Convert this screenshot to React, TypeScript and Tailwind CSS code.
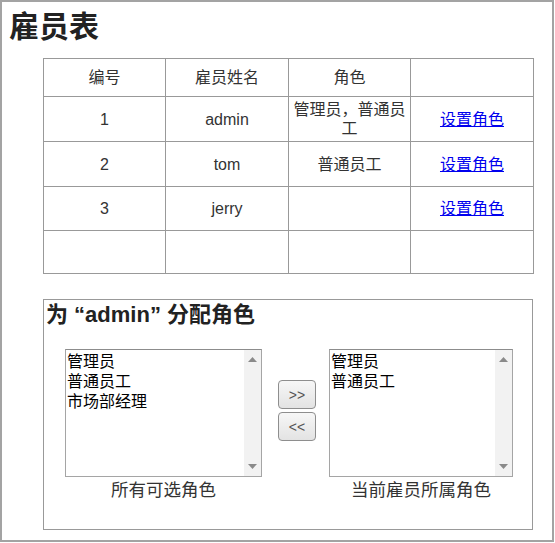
import React from 'react';

const rows = [
  { id: '1', name: 'admin', roles: '管理员，普通员工', h: 'h-[45px]', link: true },
  { id: '2', name: 'tom', roles: '普通员工', h: 'h-[45px]', link: true },
  { id: '3', name: 'jerry', roles: '', h: 'h-[44px]', link: true },
  { id: '', name: '', roles: '', h: 'h-[43px]', link: false },
];

const ListBox: React.FC<{ items: string[]; width: string }> = ({ items, width }) => (
  <div className={`${width} h-[128px] border border-[#a5a5a5] border-t-[#8c8c8c] bg-white flex`}>
    <div className="flex-1 pl-[1px] pt-[2px] text-[16px] leading-[20px] text-black">
      {items.map((it) => (
        <div key={it}>{it}</div>
      ))}
    </div>
    <div className="w-[17px] bg-[#f2f2f2] flex flex-col items-center justify-between py-[7px]">
      <svg width="9" height="5" viewBox="0 0 9 5">
        <polygon points="0,5 4.5,0 9,5" fill="#8a8a8a" />
      </svg>
      <svg width="9" height="5" viewBox="0 0 9 5">
        <polygon points="0,0 9,0 4.5,5" fill="#8a8a8a" />
      </svg>
    </div>
  </div>
);

const Btn: React.FC<{ label: string }> = ({ label }) => (
  <button className="w-[38px] h-[29px] rounded-[4px] border border-[#8e8e8e] bg-gradient-to-b from-[#f7f7f7] to-[#e3e3e3] text-[14px] text-[#555] leading-none">
    {label}
  </button>
);

export default function App() {
  return (
    <div
      className="w-[554px] h-[542px] border-2 border-[#a3a3a3] bg-white text-[#333]"
      style={{ fontFamily: '"Liberation Sans", "Noto Sans CJK SC", sans-serif' }}
    >
      <h1 className="text-[30px] font-bold leading-none text-[#222] pl-[7px] pt-[10px] h-[56px]">雇员表</h1>

      <table className="ml-[41px] w-[490px] border-collapse table-fixed text-[16px] leading-[19px] text-center">
        <tbody>
          <tr className="h-[38px]">
            <td className="border border-[#999] w-[122px]">编号</td>
            <td className="border border-[#999] w-[123px]">雇员姓名</td>
            <td className="border border-[#999] w-[122px]">角色</td>
            <td className="border border-[#999] w-[123px]"></td>
          </tr>
          {rows.map((r, i) => (
            <tr key={i} className={r.h}>
              <td className="border border-[#999]">{r.id}</td>
              <td className="border border-[#999]">{r.name}</td>
              <td className="border border-[#999] px-[2px]">{r.roles}</td>
              <td className="border border-[#999]">
                {r.link && (
                  <a href="#" className="text-[#0000ee] underline">
                    设置角色
                  </a>
                )}
              </td>
            </tr>
          ))}
        </tbody>
      </table>

      <div className="ml-[41px] mt-[25px] w-[490px] h-[231px] border border-[#999] flex flex-col">
        <h2 className="text-[22px] font-bold leading-none text-[#222] pl-[2px] pt-[4px]">
          为 “admin” 分配角色
        </h2>
        <div className="flex mt-[23px] pl-[21px]">
          <div className="flex flex-col items-center">
            <ListBox items={['管理员', '普通员工', '市场部经理']} width="w-[197px]" />
            <div className="text-[17.5px] leading-[22px] mt-[2px]">所有可选角色</div>
          </div>
          <div className="flex flex-col gap-[3px] ml-[16px] mt-[31px]">
            <Btn label=">>" />
            <Btn label="<<" />
          </div>
          <div className="flex flex-col items-center ml-[13px]">
            <ListBox items={['管理员', '普通员工']} width="w-[184px]" />
            <div className="text-[17.5px] leading-[22px] mt-[2px]">当前雇员所属角色</div>
          </div>
        </div>
      </div>
    </div>
  );
}
